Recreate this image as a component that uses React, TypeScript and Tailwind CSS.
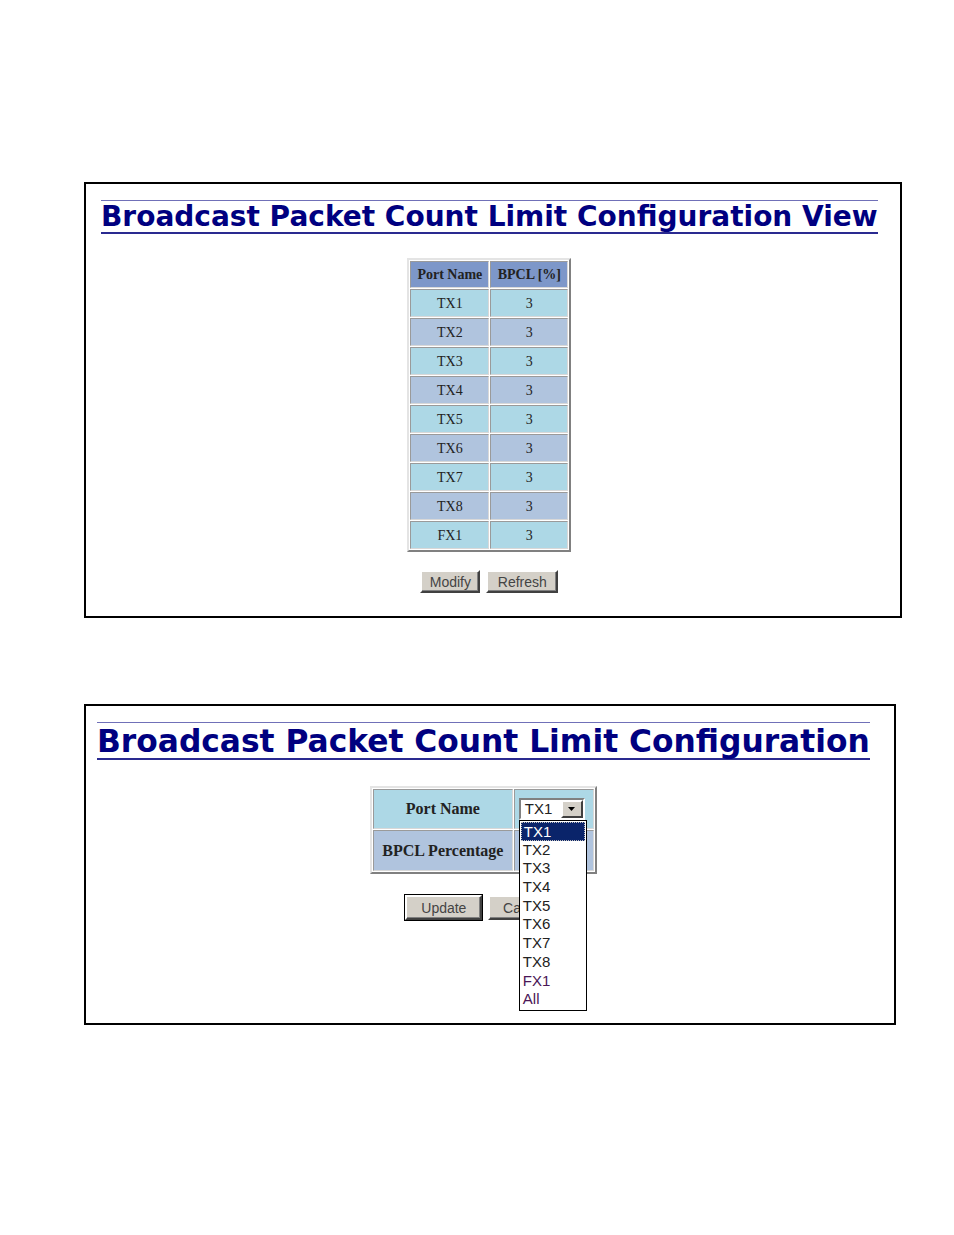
import React from 'react';

const ports = ['TX1', 'TX2', 'TX3', 'TX4', 'TX5', 'TX6', 'TX7', 'TX8', 'FX1'];
const options = ['TX1', 'TX2', 'TX3', 'TX4', 'TX5', 'TX6', 'TX7', 'TX8', 'FX1', 'All'];

const cell = 'border border-t-[#9a9a9a] border-l-[#9a9a9a] border-b-[#d8d8d8] border-r-[#d8d8d8] p-0 text-center align-middle';

const Title: React.FC<{ text: string; size: string }> = ({ text, size }) => (
  <h1
    className={`inline-block border-t border-b-2 border-t-[#7070b8] border-b-[#2a2a90] whitespace-nowrap font-bold text-[#000080] ${size}`}
    style={{ fontFamily: '"DejaVu Sans", Verdana, sans-serif' }}
  >
    {text}
  </h1>
);

const Btn: React.FC<{ label: string; w: string; h?: string; dark?: boolean }> = ({ label, w, h = 'h-[23px]', dark }) => (
  <button
    className={`${w} ${h} ${dark ? 'outline outline-1 outline-black' : ''} bg-[#d4d0c8] border-2 border-t-white border-l-white border-b-[#404040] border-r-[#404040] text-[14px] leading-none text-[#444] shadow-[inset_-1px_-1px_0_#808080]`}
    style={{ fontFamily: '"Liberation Sans", Arial, sans-serif' }}
  >
    {label}
  </button>
);

export default function App() {
  return (
    <div className="min-h-[1235px] bg-white pt-[182px]">
      {/* view panel */}
      <div className="ml-[84px] w-[818px] border-2 border-black pl-[15px] pt-[16px] pb-[23px]">
        <div className="inline-flex flex-col items-center">
          <Title text="Broadcast Packet Count Limit Configuration View" size="text-[28px] leading-[30px] pt-[1px]" />
          <table
            className="mt-[24px] border-separate border-spacing-[1px] border-2 border-t-[#e4e4e4] border-l-[#e4e4e4] border-b-[#808080] border-r-[#808080] text-[14px] text-[#222]"
            style={{ fontFamily: '"Liberation Serif", "Times New Roman", serif' }}
          >
            <thead>
              <tr className="h-[27px] bg-[#7d97c9] font-bold">
                <td className={`${cell} w-[79px]`}>Port Name</td>
                <td className={`${cell} w-[78px]`}>BPCL [%]</td>
              </tr>
            </thead>
            <tbody>
              {ports.map((p, i) => (
                <tr key={p} className={`h-[28px] ${i % 2 === 0 ? 'bg-[#add8e6]' : 'bg-[#b0c4de]'}`}>
                  <td className={cell}>{p}</td>
                  <td className={cell}>3</td>
                </tr>
              ))}
            </tbody>
          </table>
          <div className="mt-[18px] flex gap-[6px]">
            <Btn label="Modify" w="w-[60px]" />
            <Btn label="Refresh" w="w-[72px]" />
          </div>
        </div>
      </div>

      {/* edit panel */}
      <div className="mt-[86px] ml-[84px] w-[812px] border-2 border-black pl-[11px] pt-[16px] pb-[103px]">
        <div className="inline-flex flex-col items-center">
          <Title text="Broadcast Packet Count Limit Configuration" size="text-[31.3px] leading-[34px] pt-[1px]" />
          <table
            className="mt-[26px] border-separate border-spacing-[1px] border-2 border-t-[#e4e4e4] border-l-[#e4e4e4] border-b-[#808080] border-r-[#808080] text-[16px] font-bold text-[#222]"
            style={{ fontFamily: '"Liberation Serif", "Times New Roman", serif' }}
          >
            <tbody>
              <tr className="h-[40px] bg-[#add8e6]">
                <td className={`${cell} w-[140px]`}>Port Name</td>
                <td className={`${cell} w-[80px] relative`}>
                  <div className="ml-[4px] flex h-[22px] w-[66px] border-2 border-t-[#808080] border-l-[#808080] border-b-white border-r-white bg-white">
                    <span
                      className="flex-1 pl-[4px] text-left text-[15px] font-normal leading-[18px] text-[#222]"
                      style={{ fontFamily: '"Liberation Sans", Arial, sans-serif' }}
                    >
                      TX1
                    </span>
                    <span className="flex w-[22px] items-center justify-center bg-[#d4d0c8] border-2 border-t-white border-l-white border-b-[#404040] border-r-[#404040]">
                      <svg width="7" height="4" viewBox="0 0 7 4">
                        <path d="M0 0h7L3.5 4z" fill="#000" />
                      </svg>
                    </span>
                  </div>
                  {/* open dropdown list */}
                  <div
                    className="absolute left-[4px] top-[30px] z-10 w-[68px] border border-black bg-white py-[1px] text-left text-[15px] font-normal"
                    style={{ fontFamily: '"Liberation Sans", Arial, sans-serif' }}
                  >
                    {options.map((o, i) => (
                      <div
                        key={o}
                        className={
                          i === 0
                            ? 'mx-[1px] h-[18.7px] border border-dotted border-[#c0c0c0] bg-[#0a246a] pl-[2px] leading-[17px] text-white'
                            : `h-[18.7px] pl-[3px] leading-[18px] ${i >= 8 ? 'text-[#4a1656]' : 'text-[#222]'}`
                        }
                      >
                        {o}
                      </div>
                    ))}
                  </div>
                </td>
              </tr>
              <tr className="h-[41px] bg-[#b0c4de]">
                <td className={cell}>BPCL Percentage</td>
                <td className={cell}></td>
              </tr>
            </tbody>
          </table>
          <div className="mt-[21px] flex gap-[6px]">
            <Btn label="Update" w="w-[77px]" h="h-[25px]" dark />
            <Btn label="Cancel" w="w-[73px]" h="h-[25px]" />
          </div>
        </div>
      </div>
    </div>
  );
}
